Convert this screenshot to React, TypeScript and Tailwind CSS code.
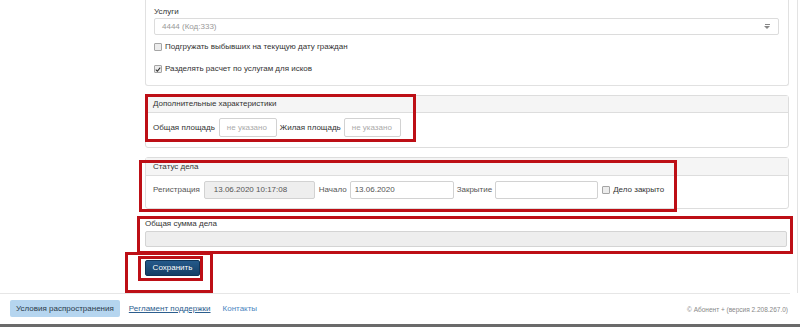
import React from 'react'

const font = { fontFamily: '"Liberation Sans", Arial, sans-serif' }

function Checkbox({ checked }: { checked?: boolean }) {
  return (
    <span className="flex h-[8px] w-[8px] items-center justify-center rounded-[1px] border border-[#a5a5a5] bg-[#ececec]">
      {checked && (
        <svg viewBox="0 0 8 8" className="h-[7px] w-[7px]">
          <path d="M1 4.2 L3.2 6.2 L7 1.5" fill="none" stroke="#333" strokeWidth="1.4" />
        </svg>
      )}
    </span>
  )
}

function Field({ w, value, placeholder, disabled }: { w: string; value?: string; placeholder?: string; disabled?: boolean }) {
  return (
    <div
      className={`flex h-full items-center whitespace-nowrap rounded-[2px] border border-[#d2d2d2] text-[8px] ${w} ${
        disabled ? 'bg-[#eeeeee] pl-[9px] text-[#555]' : 'bg-white pl-[4px] text-[#555]'
      }`}
    >
      {value ?? <span className="pl-[3px] text-[#aaa]">{placeholder}</span>}
    </div>
  )
}

export default function App() {
  return (
    <div className="relative h-[327px] w-[800px] overflow-hidden bg-white text-[#333]" style={font}>
      {/* основная часть */}
      <div className="h-[293px] w-[798px] border-r border-[#e3e3e3] pl-[145px] pr-[8px] text-[8px]">
        {/* Услуги */}
        <div className="h-[86px] rounded-b-[3px] border-x border-b border-[#e1e1e1] pl-[8px] pr-[9px] pt-[6px]">
          <div className="h-[11px] leading-[11px]">Услуги</div>
          <div className="mt-[1px] flex h-[17px] items-center justify-between rounded-[2px] border border-[#dcdcdc] bg-white pl-[7px] pr-[8px] text-[#999]">
            <span>4444 (Код:333)</span>
            <span className="flex flex-col items-center">
              <span className="h-px w-[5px] bg-[#888]" />
              <span className="mt-px h-0 w-0 border-x-[3px] border-t-[3px] border-x-transparent border-t-[#888]" />
            </span>
          </div>
          <div className="mt-[6px] flex h-[12px] items-center gap-[3px]">
            <Checkbox />
            <span>Подгружать выбывших на текущую дату граждан</span>
          </div>
          <div className="mt-[10px] flex h-[12px] items-center gap-[3px]">
            <Checkbox checked />
            <span>Разделять расчет по услугам для исков</span>
          </div>
        </div>

        {/* Дополнительные характеристики */}
        <div className="mt-[9px] h-[53px] rounded-[3px] border border-[#dddddd]">
          <div className="flex h-[17px] items-center border-b border-[#dddddd] bg-[#f5f5f5] pl-[7px]">
            Дополнительные характеристики
          </div>
          <div className="mt-[5px] flex h-[19px] items-center gap-[3px] pl-[7px]">
            <span className="mr-[1px]">Общая площадь</span>
            <Field w="w-[58px]" placeholder="не указано" />
            <span>Жилая площадь</span>
            <Field w="w-[57px]" placeholder="не указано" />
          </div>
        </div>

        {/* Статус дела */}
        <div className="mt-[9px] h-[52px] rounded-[3px] border border-[#dddddd]">
          <div className="flex h-[18px] items-center border-b border-[#dddddd] bg-[#f5f5f5] pl-[7px]">
            Статус дела
          </div>
          <div className="mt-[5px] flex h-[18px] items-center gap-[3px] pl-[7px] text-[#555]">
            <span className="mr-[1px]">Регистрация</span>
            <Field w="w-[111px]" value="13.06.2020 10:17:08" disabled />
            <span className="ml-[1px]">Начало</span>
            <Field w="w-[104px]" value="13.06.2020" />
            <span>Закрытие</span>
            <Field w="w-[103px]" />
            <span className="ml-[1px] flex items-center gap-[3px] text-[#333]">
              <Checkbox />
              Дело закрыто
            </span>
          </div>
        </div>

        {/* Общая сумма дела */}
        <div className="mt-[9px] h-[11px] leading-[11px]">Общая сумма дела</div>
        <div className="mr-[2px] mt-[2px] h-[16px] rounded-[2px] border border-[#d4d4d4] bg-[#eeeeee]" />

        <button className="mt-[13px] flex h-[16px] w-[55px] items-center justify-center rounded-[2px] border border-[#0f3458] bg-[linear-gradient(#24598a,#153f66)] text-white">
          Сохранить
        </button>
      </div>

      {/* подвал */}
      <div className="flex h-[31px] w-[790px] items-start justify-between border-t border-[#e6e6e6] pl-[10px] pr-[2px] pt-[6px] text-[8px]">
        <div className="flex items-center">
          <span className="flex h-[17px] items-center rounded-[2px] bg-[#b5d5ef] px-[6px] text-[#2a3a4a]">
            Условия распространения
          </span>
          <span className="ml-[9px] text-[#2c5e8e] underline">Регламент поддержки</span>
          <span className="ml-[12px] text-[#4d87bf]">Контакты</span>
        </div>
        <span className="mt-[5px] text-[6.5px] text-[#888]">© Абонент + (версия 2.208.267.0)</span>
      </div>
      <div className="h-[3px] w-full bg-[#6a6a6a]" />

      {/* красные рамки-пометки */}
      <div className="pointer-events-none absolute left-[145px] top-[94px] h-[48px] w-[271px] border-[3px] border-[#bd0f16]" />
      <div className="pointer-events-none absolute left-[139px] top-[160px] h-[52px] w-[538px] border-[3px] border-[#bd0f16]" />
      <div className="pointer-events-none absolute left-[137px] top-[216px] h-[38px] w-[656px] border-[3px] border-[#bd0f16]" />
      <div className="pointer-events-none absolute left-[125px] top-[252px] h-[41px] w-[88px] border-[3px] border-[#bd0f16]" />
      <div className="pointer-events-none absolute left-[138px] top-[256px] h-[25px] w-[65px] border-[3px] border-[#bd0f16]" />
    </div>
  )
}
